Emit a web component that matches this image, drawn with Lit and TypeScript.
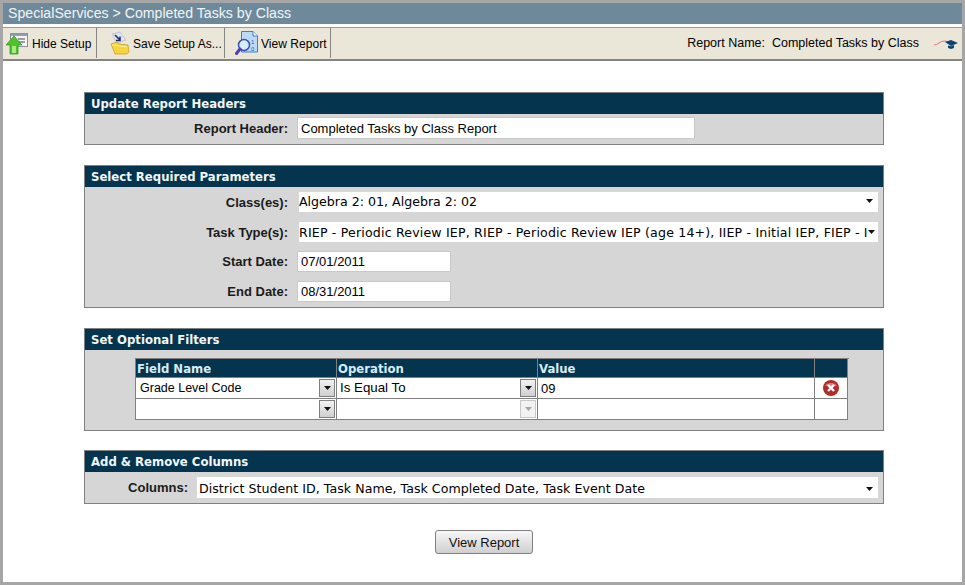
import { LitElement, html, css, svg } from "lit";
import { customElement } from "lit/decorators.js";

const arrow = svg`<svg class="arrow" width="7" height="4" viewBox="0 0 7 4"><path d="M0 0h7L3.500 4z" fill="#111"/></svg>`;

@customElement("app-root")
export class AppRoot extends LitElement {
  static styles = css`
    :host { display: block; width: 965px; height: 585px; box-sizing: border-box; border: 3px solid #a6a6a6; background: #fff; font-family: "Liberation Sans", Arial, sans-serif; font-size: 12px; color: #000; overflow: hidden; }
    .title { height: 21px; background: #6e8a9a; color: #f1f5f7; font-size: 14.15px; line-height: 21px; padding-left: 5px; }
    .toolbar { margin-top: 3px; background: #ebe7d8; border-top: 1px solid #9a9a9a; border-bottom: 2px solid #858585; display: flex; align-items: stretch; height: 31px; }
    .tool { display: flex; align-items: center; border-right: 1px solid #858585; height: 30px; box-sizing: border-box; }
    .tool span { padding-top: 2px; }
    .tool.a { width: 94px; padding-left: 3px; gap: 4px; }
    .tool.b { width: 128px; padding-left: 13px; gap: 3px; }
    .tool.c { width: 106px; padding-left: 10px; gap: 3px; }
    .tool.c span { font-size: 12.1px; }
    .name { margin-left: auto; display: flex; align-items: center; height: 30px; white-space: pre; padding-right: 4px; font-size: 12.5px; }
    .name svg { margin-left: 15px; margin-top: 2px; }
    .content { padding: 31px 78px 0 81px; display: flex; flex-direction: column; }
    .section { border: 1px solid #808080; background: #d6d6d6; }
    .section + .section { margin-top: 20px; }
    .section.last { margin-top: 19px; }
    .section h2 { margin: 0; background: #04344e; color: #f2f6f8; font-family: "DejaVu Sans", Verdana, sans-serif; font-size: 11.7px; font-weight: bold; height: 21px; line-height: 23px; padding-left: 6px; }
    .row { display: flex; align-items: center; }
    .label { font-weight: bold; font-size: 13px; text-align: right; color: #1a1a1a; flex: none; }
    .l1 { width: 203px; margin-right: 9px; }
    .l4 { width: 103px; margin-right: 9px; }
    .body1 { padding: 3px 0 5px; }
    .body2 { padding: 5px 0 5px; display: flex; flex-direction: column; }
    .body3 { padding: 8px 35px 10px 50px; }
    .body4 { padding: 5px 0 5px; }
    input { border: 1px solid #c8c8c8; background: #fff; box-sizing: border-box; font: 13px "Liberation Sans", Arial, sans-serif; color: #000; padding: 0 3px; margin: 0; outline: none; border-radius: 1px; }
    .h1 { width: 398px; height: 22px; }
    .date { width: 154px; height: 21px; }
    .select { background: #fff; font-family: "DejaVu Sans", Verdana, sans-serif; font-size: 12.6px; display: flex; align-items: center; justify-content: space-between; padding: 0 5px 0 0; box-sizing: border-box; white-space: nowrap; width: 579px; margin-left: 2px; height: 20px; }
    .select.up { padding-bottom: 2px; }
    .select .wide { letter-spacing: 0.165px; }
    .arrow { flex: none; }
    .s4 { width: 681px; margin-left: 0; height: 21px; padding-left: 2px; padding-top: 2px; letter-spacing: 0.03px; }
    .gap-r { margin-top: 10px; }
    .gap-d { margin-top: 9px; }
    .grid { display: grid; grid-template-columns: 201px 201px 277px 33px; border: 1px solid #808080; border-right: 0; border-bottom: 0; width: 713px; }
    .grid > div { border-right: 1px solid #808080; border-bottom: 1px solid #808080; box-sizing: border-box; background: #fff; height: 21px; display: flex; align-items: center; min-width: 0; font-size: 12.5px; }
    .grid > div.th { background: #04344e; color: #d8ecf8; font-family: "DejaVu Sans", Verdana, sans-serif; font-weight: bold; font-size: 11.7px; height: 19px; padding: 2px 0 0 1px; }
    .combo { justify-content: space-between; padding-left: 4px; }
    .grid > div.combo.sec { padding-left: 3px; font-size: 13.3px; }
    .combo span { padding-bottom: 1px; }
    .combo b { flex: none; width: 16px; height: 18px; margin-right: 1px; box-sizing: border-box; background: linear-gradient(#f2f2f2, #cfcfcf); border: 1px solid #7e7e7e; display: flex; align-items: center; justify-content: center; }
    .combo b.off { background: #f2f2f2; border-color: #c8c8c8; }
    .combo b.off .arrow path { fill: #a5a5a5; }
    .grid > div.val { padding-left: 3px; font-size: 13px; }
    .del { justify-content: center; }
    .actions { display: flex; justify-content: center; margin-top: 26px; }
    button { width: 98px; height: 24px; border: 1px solid #808080; border-radius: 3px; background: linear-gradient(#f7f7f7, #cfcfcf); font: 13px "Liberation Sans", Arial, sans-serif; color: #111; padding: 0; }
  `;

  render() {
    return html`
      <div class="title">SpecialServices &gt; Completed Tasks by Class</div>
      <div class="toolbar">
        <div class="tool a">
          <svg width="22" height="24" viewBox="0 0 22 24">
            <rect x="4.500" y="2.500" width="17" height="13" fill="#f6f6f6" stroke="#8a8f99"/>
            <rect x="5" y="3" width="16" height="2" fill="#8f9fb8"/>
            <path d="M12 8h7M12 11h7" stroke="#444"/>
            <path d="M8 5L0 14h4v9h8v-9h4z" fill="#4fc22f" stroke="#2e8a24" stroke-width=".7"/>
            <path d="M6 15h4v7H6z" fill="#a6ec7f"/>
          </svg>
          <span>Hide Setup</span>
        </div>
        <div class="tool b">
          <svg width="20" height="24" viewBox="0 0 20 24">
            <path d="M2 3l8-2 6 8-9 3z" fill="#dfe3f2" stroke="#a9afcb" stroke-width=".6"/>
            <path d="M5 4l5 5M10 5.500V9.500H6" stroke="#1d2a66" stroke-width="1.500" fill="none"/>
            <path d="M1 13l6-2 2 2 9 1 1 7-2 2H5z" fill="#f8d43c" stroke="#c59a1c" stroke-width=".7"/>
            <path d="M2 14l15 2" stroke="#fdf0a0"/>
          </svg>
          <span>Save Setup As...</span>
        </div>
        <div class="tool c">
          <svg width="23" height="26" viewBox="0 0 23 26">
            <path d="M6.500 1.500h11.500l4.500 4.500v16H6.500z" fill="#bcd9f5" stroke="#3f7fc8"/>
            <path d="M18 1.500v4.500h4.500" fill="#fff" stroke="#3f7fc8"/>
            <text x="16" y="14" font-size="6" font-family="Liberation Sans" fill="#2b5fa8">1</text>
            <text x="16" y="21" font-size="6" font-family="Liberation Sans" fill="#2b5fa8">0</text>
            <circle cx="9" cy="15" r="5.500" fill="#d6eefc" stroke="#3b4fb0" stroke-width="1.500"/>
            <path d="M5 19l-3.500 4.500" stroke="#4c3fb5" stroke-width="3" stroke-linecap="round"/>
          </svg>
          <span>View Report</span>
        </div>
        <div class="name">
          <span>Report Name:  Completed Tasks by Class</span>
          <svg width="24" height="12" viewBox="0 0 24 12">
            <path d="M0 7c4 0 6-4 10-4 3 0 4 1 6 1" stroke="#e8707c" fill="none"/>
            <path d="M11 4l6-2 7 3-7 3z" fill="#0b4470"/>
            <path d="M14 7.500v2.500l3 1 3-1V7l-3 1.200z" fill="#0b4470"/>
          </svg>
        </div>
      </div>
      <div class="content">
        <section class="section">
          <h2>Update Report Headers</h2>
          <div class="body1 row">
            <span class="label l1">Report Header:</span>
            <input class="h1" .value=${"Completed Tasks by Class Report"} />
          </div>
        </section>
        <section class="section">
          <h2>Select Required Parameters</h2>
          <div class="body2">
            <div class="row">
              <span class="label l1">Class(es):</span>
              <div class="select up"><span>Algebra 2: 01, Algebra 2: 02</span>${arrow}</div>
            </div>
            <div class="row gap-r">
              <span class="label l1">Task Type(s):</span>
              <div class="select"><span class="wide">RIEP - Periodic Review IEP, RIEP - Periodic Review IEP (age 14+), IIEP - Initial IEP, FIEP - I</span>${arrow}</div>
            </div>
            <div class="row gap-d">
              <span class="label l1">Start Date:</span>
              <input class="date" .value=${"07/01/2011"} />
            </div>
            <div class="row gap-d">
              <span class="label l1">End Date:</span>
              <input class="date" .value=${"08/31/2011"} />
            </div>
          </div>
        </section>
        <section class="section">
          <h2>Set Optional Filters</h2>
          <div class="body3">
            <div class="grid">
              <div class="th">Field Name</div><div class="th">Operation</div><div class="th">Value</div><div class="th"></div>
              <div class="combo"><span>Grade Level Code</span><b>${arrow}</b></div>
              <div class="combo sec"><span>Is Equal To</span><b>${arrow}</b></div>
              <div class="val">09</div>
              <div class="del">
                <svg width="16" height="16" viewBox="0 0 16 16">
                  <circle cx="8" cy="8" r="8" fill="#b22a2a"/>
                  <path d="M2 6a6.500 5 0 0 1 12 0z" fill="#d98080"/>
                  <path d="M5 5l6 6M11 5l-6 6" stroke="#fff" stroke-width="2.400"/>
                </svg>
              </div>
              <div class="combo"><span></span><b>${arrow}</b></div>
              <div class="combo sec"><span></span><b class="off">${arrow}</b></div>
              <div></div>
              <div></div>
            </div>
          </div>
        </section>
        <section class="section last">
          <h2>Add &amp; Remove Columns</h2>
          <div class="body4 row">
            <span class="label l4">Columns:</span>
            <div class="select s4"><span>District Student ID, Task Name, Task Completed Date, Task Event Date</span>${arrow}</div>
          </div>
        </section>
        <div class="actions"><button>View Report</button></div>
      </div>
    `;
  }
}
